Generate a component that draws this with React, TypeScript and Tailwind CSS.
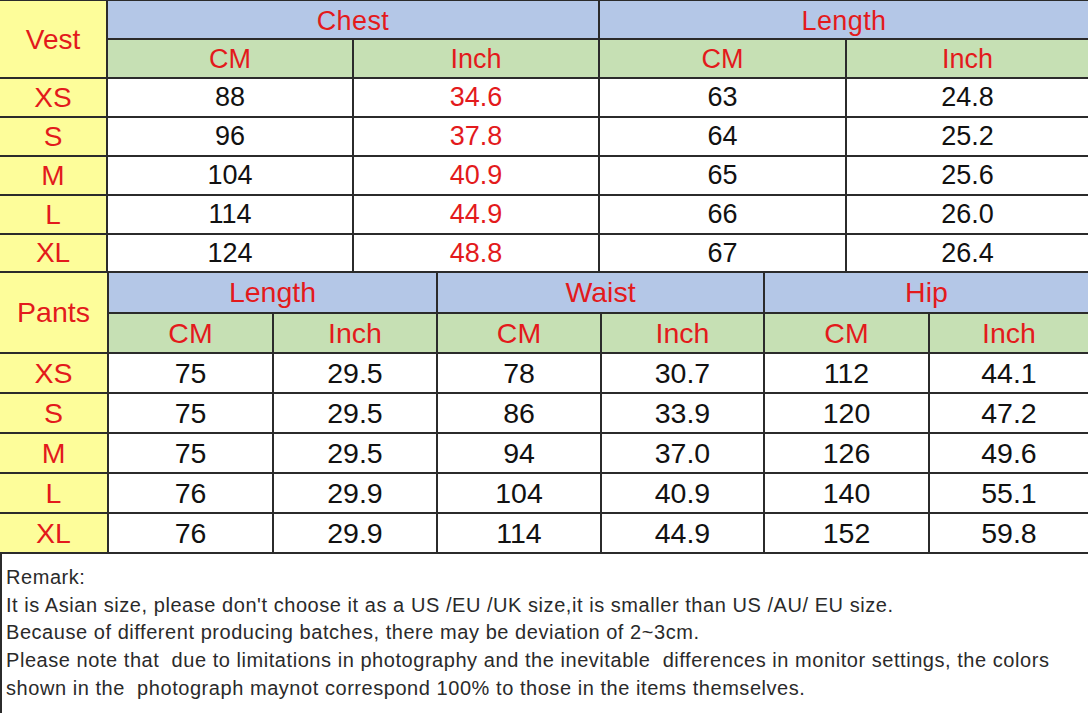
import React from "react";

const vestRows = [
  ["XS", "88", "34.6", "63", "24.8"],
  ["S", "96", "37.8", "64", "25.2"],
  ["M", "104", "40.9", "65", "25.6"],
  ["L", "114", "44.9", "66", "26.0"],
  ["XL", "124", "48.8", "67", "26.4"],
];

const pantsRows = [
  ["XS", "75", "29.5", "78", "30.7", "112", "44.1"],
  ["S", "75", "29.5", "86", "33.9", "120", "47.2"],
  ["M", "75", "29.5", "94", "37.0", "126", "49.6"],
  ["L", "76", "29.9", "104", "40.9", "140", "55.1"],
  ["XL", "76", "29.9", "114", "44.9", "152", "59.8"],
];

const cell = "flex items-center justify-center leading-none";
const red = "text-[#e31a1c]";

export default function App() {
  return (
    <div className="w-[1088px] h-[713px] bg-white overflow-hidden" style={{ fontFamily: '"Liberation Sans", Arial, sans-serif' }}>
      {/* Vest table */}
      <div className="grid grid-cols-[106px_244px_244px_245px_241px] grid-rows-[37px_37px_37px_37px_37px_37px_36px] gap-[2px] bg-[#2b2b2b] border-t border-[#2b2b2b] text-[27px]">
        <div className={`${cell} row-span-2 bg-[#fdfd9a] ${red} text-[28px] pt-[2px]`}>Vest</div>
        <div className={`${cell} col-span-2 bg-[#b4c7e7] ${red} pt-[3px] tracking-[0.4px]`}>Chest</div>
        <div className={`${cell} col-span-2 bg-[#b4c7e7] ${red} pt-[3px] tracking-[0.4px]`}>Length</div>
        <div className={`${cell} bg-[#c6e0b4] ${red} pt-[2px]`}>CM</div>
        <div className={`${cell} bg-[#c6e0b4] ${red} pt-[2px]`}>Inch</div>
        <div className={`${cell} bg-[#c6e0b4] ${red} pt-[2px]`}>CM</div>
        <div className={`${cell} bg-[#c6e0b4] ${red} pt-[2px]`}>Inch</div>
        {vestRows.map((r) => (
          <React.Fragment key={r[0]}>
            <div className={`${cell} bg-[#fdfd9a] ${red} text-[28px]`}>{r[0]}</div>
            <div className={`${cell} bg-white text-[#111]`}>{r[1]}</div>
            <div className={`${cell} bg-white ${red}`}>{r[2]}</div>
            <div className={`${cell} bg-white text-[#111]`}>{r[3]}</div>
            <div className={`${cell} bg-white text-[#111]`}>{r[4]}</div>
          </React.Fragment>
        ))}
      </div>

      {/* Pants table */}
      <div className="grid grid-cols-[107px_163px_162px_162px_161px_163px_158px] grid-rows-[39px_38px_38px_38px_38px_38px_38px] gap-[2px] bg-[#2b2b2b] border-y-2 border-[#2b2b2b] text-[28.5px]">
        <div className={`${cell} row-span-2 bg-[#fdfd9a] ${red}`}>Pants</div>
        <div className={`${cell} col-span-2 bg-[#b4c7e7] ${red}`}>Length</div>
        <div className={`${cell} col-span-2 bg-[#b4c7e7] ${red}`}>Waist</div>
        <div className={`${cell} col-span-2 bg-[#b4c7e7] ${red}`}>Hip</div>
        {["CM", "Inch", "CM", "Inch", "CM", "Inch"].map((t, i) => (
          <div key={i} className={`${cell} bg-[#c6e0b4] ${red}`}>{t}</div>
        ))}
        {pantsRows.map((r) => (
          <React.Fragment key={r[0]}>
            <div className={`${cell} bg-[#fdfd9a] ${red}`}>{r[0]}</div>
            {r.slice(1).map((v, i) => (
              <div key={i} className={`${cell} bg-white text-[#111]`}>{v}</div>
            ))}
          </React.Fragment>
        ))}
      </div>

      {/* Remarks */}
      <div className="h-[160px] border-l-2 border-[#2b2b2b] pl-[4px] pt-[10px] text-[20px] leading-[27.7px] text-[#2a2a2a] tracking-[0.55px]">
        <p>Remark:</p>
        <p>It is Asian size, please don't choose it as a US /EU /UK size,it is smaller than US /AU/ EU size.</p>
        <p>Because of different producing batches, there may be deviation of 2~3cm.</p>
        <p>Please note that&nbsp; due to limitations in photography and the inevitable&nbsp; differences in monitor settings, the colors</p>
        <p>shown in the&nbsp; photograph maynot correspond 100% to those in the items themselves.</p>
      </div>
    </div>
  );
}
